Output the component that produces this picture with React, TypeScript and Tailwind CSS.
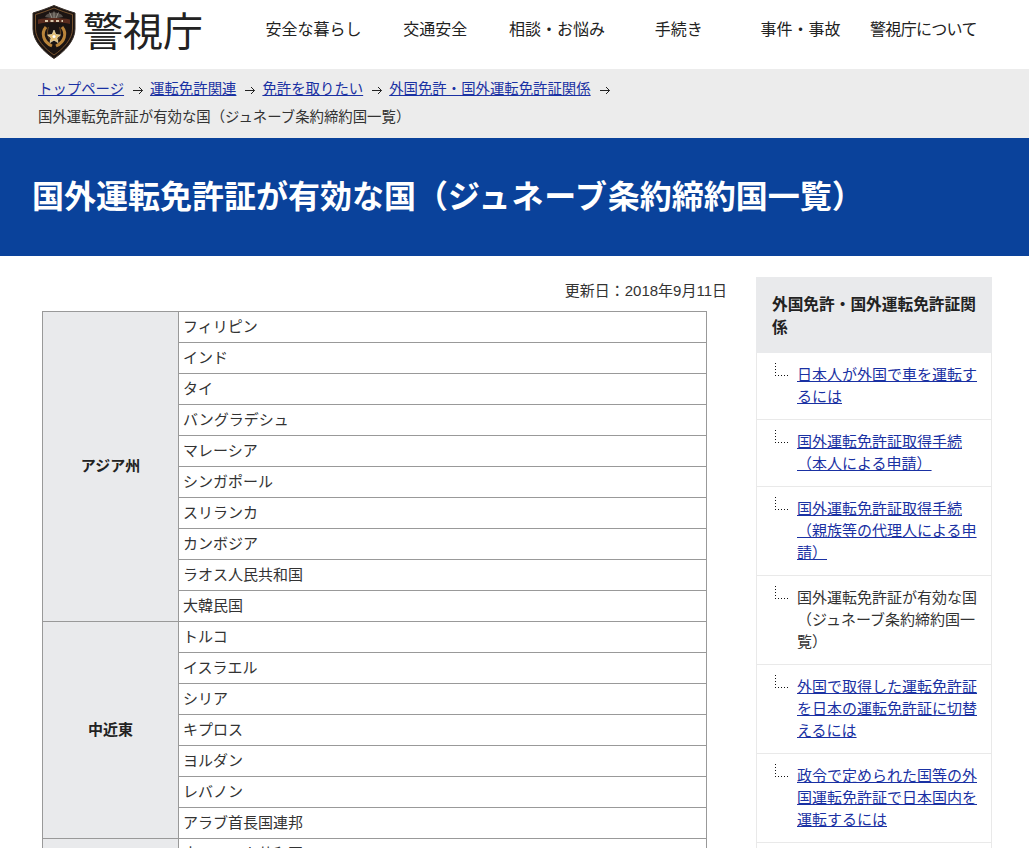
import React from 'react';

const navItems = ['安全な暮らし', '交通安全', '相談・お悩み', '手続き', '事件・事故'];

const crumbs = ['トップページ', '運転免許関連', '免許を取りたい', '外国免許・国外運転免許証関係'];

const regions = [
  {
    name: 'アジア州',
    countries: ['フィリピン', 'インド', 'タイ', 'バングラデシュ', 'マレーシア', 'シンガポール', 'スリランカ', 'カンボジア', 'ラオス人民共和国', '大韓民国'],
  },
  {
    name: '中近東',
    countries: ['トルコ', 'イスラエル', 'シリア', 'キプロス', 'ヨルダン', 'レバノン', 'アラブ首長国連邦'],
  },
  {
    name: 'アフリカ州',
    countries: ['南アフリカ共和国', 'エジプト'],
  },
];

const sideLinks = [
  { label: '日本人が外国で車を運転するには', link: true },
  { label: '国外運転免許証取得手続（本人による申請）', link: true },
  { label: '国外運転免許証取得手続（親族等の代理人による申請）', link: true },
  { label: '国外運転免許証が有効な国（ジュネーブ条約締約国一覧）', link: false },
  { label: '外国で取得した運転免許証を日本の運転免許証に切替えるには', link: true },
  { label: '政令で定められた国等の外国運転免許証で日本国内を運転するには', link: true },
  { label: '外国免許の取扱い', link: true },
];

const Logo = () => (
  <svg width="44" height="54" viewBox="0 0 44 54" className="shrink-0">
    <path d="M22 0.5 C28 3 36 6 43 8 L43 24 C43 36 32 47 22 53.5 C12 47 1 36 1 24 L1 8 C8 6 16 3 22 0.5 Z" fill="#1b1412" stroke="#3a3029" strokeWidth="1" />
    <path d="M22 3 C28 5.5 35 8 40.5 9.5 L40.5 24 C40.5 34 31 44 22 50 C13 44 3.5 34 3.5 24 L3.5 9.5 C9 8 16 5.5 22 3 Z" fill="none" stroke="#8f6336" strokeWidth="0.8" />
    {/* fan */}
    <path d="M13 12 C15 6 29 6 31 12 L25 13 L19 13 Z" fill="#57504a" />
    <path d="M22 6.5 L22 13 M17.5 7.5 L20 13 M26.5 7.5 L24 13" stroke="#b3aca2" strokeWidth="0.7" />
    {/* name band */}
    <path d="M6 19 C14 16.5 30 16.5 38 19 L38 14.5 C30 12.5 14 12.5 6 14.5 Z" fill="#5a2c1e" />
    <path d="M13 16 H31" stroke="#d8c7ac" strokeWidth="2" strokeDasharray="3 2.5" />
    {/* wreath */}
    <path d="M14 22 C9 28 11 37 20 41 M30 22 C35 28 33 37 24 41" fill="none" stroke="#b9843a" strokeWidth="3" />
    <path d="M16.5 22 C14.5 27 15.5 32 19 36 M27.5 22 C29.5 27 28.5 32 25 36" fill="none" stroke="#5d4020" strokeWidth="1.2" />
    {/* star */}
    <path d="M22 25 L23.8 29.4 L28.4 30 L25 33 L26 37.6 L22 35.2 L18 37.6 L19 33 L15.6 30 L20.2 29.4 Z" fill="#e6c074" stroke="#fff3cf" strokeWidth="0.6" />
    <circle cx="22" cy="31.5" r="1.5" fill="#fff" />
  </svg>
);

const Arrow = () => (
  <svg width="10" height="9" viewBox="0 0 10 9" className="ml-[9px] mr-[7px] mt-[2px] shrink-0" fill="none" stroke="#222" strokeWidth="1">
    <path d="M0 4.5 H9.5 M6 1 L9.5 4.5 L6 8" />
  </svg>
);

const TreeMark = () => (
  <svg width="14" height="13" viewBox="0 0 14 13" className="absolute left-[18px] top-[10px]" fill="none" stroke="#111" strokeWidth="1" strokeDasharray="1 2">
    <path d="M0.5 0 V13" />
    <path d="M3 12.5 H14" />
  </svg>
);

const App: React.FC = () => {
  return (
    <div className="h-[848px] overflow-hidden bg-white text-[#333] font-['Liberation_Sans','Noto_Sans_CJK_JP',sans-serif]">
      {/* Header */}
      <header className="flex h-[69px] items-center pb-[6px] pl-[32px]">
        <Logo />
        <span className="ml-[7px] mt-[1px] text-[40px] leading-none text-[#222]">警視庁</span>
        <nav className="mb-[4px] ml-[49.5px] flex">
          {navItems.map((item) => (
            <a key={item} className="w-[121.8px] text-center text-base text-[#222]">
              {item}
            </a>
          ))}
          <a className="w-[123.8px] text-center text-base tracking-[-0.7px] text-[#222]">警視庁について</a>
        </nav>
      </header>

      {/* Breadcrumb */}
      <div className="h-[69px] bg-[#ececec] pl-[38px] pt-[6px] text-[14.4px] leading-[28px]">
        <ul className="flex flex-wrap items-center">
          {crumbs.map((c) => (
            <li key={c} className="flex items-center">
              <a href="#" className="text-[#1a31a3] underline">{c}</a>
              <Arrow />
            </li>
          ))}
          <li className="w-full">国外運転免許証が有効な国（ジュネーブ条約締約国一覧）</li>
        </ul>
      </div>

      {/* Title */}
      <h1 className="flex h-[118px] items-center bg-[#0a429b] pl-[32px] text-[32px] font-bold text-white">
        <span>
          国外運転免許証が有効な国（<span className="tracking-[0.8px]">ジュネーブ</span>条約締約国一覧）
        </span>
      </h1>

      {/* Main */}
      <div className="flex pl-[42px]">
        <main className="w-[685px]">
          <p className="mt-[23px] text-right text-[15px] leading-[24px]">更新日：2018年9月11日</p>
          <table className="mt-[8px] w-[665px] table-fixed border-collapse text-[15px]">
            <tbody>
              {regions.map((r) =>
                r.countries.map((c, i) => (
                  <tr key={c} className="h-[31px]">
                    {i === 0 && (
                      <th rowSpan={r.countries.length} className="w-[136px] border border-[#999] bg-[#e9eaec] font-bold text-[#222]">
                        {r.name}
                      </th>
                    )}
                    <td className="border border-[#999] px-[4px] py-0 leading-[22px]">{c}</td>
                  </tr>
                )),
              )}
            </tbody>
          </table>
        </main>

        {/* Side menu */}
        <aside className="ml-[29px] mt-[21px] w-[236px]">
          <h2 className="h-[76px] bg-[#e9eaec] px-[16px] pt-[16px] text-[15.7px] font-bold leading-[23px] text-[#222]">
            外国免許・国外運転免許証関係
          </h2>
          <ul>
            {sideLinks.map((s) => (
              <li key={s.label} className="relative border border-t-0 border-[#e9e9e9] py-[11px] pl-[40px] pr-[13px] text-[15px] leading-[22px]">
                <TreeMark />
                {s.link ? (
                  <a href="#" className="text-[#1a31a3] underline">{s.label}</a>
                ) : (
                  s.label
                )}
              </li>
            ))}
          </ul>
        </aside>
      </div>
    </div>
  );
};

export default App;
